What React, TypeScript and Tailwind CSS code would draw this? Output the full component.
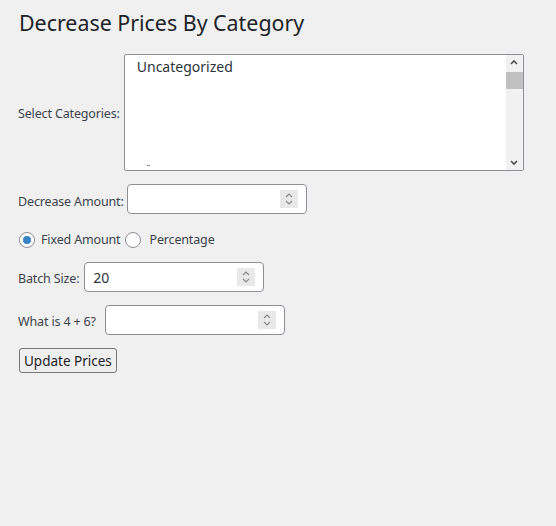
const Spinner = () => (
  <span className="flex h-[18px] w-[18px] flex-col items-center justify-center bg-[#e9e9ea]">
    <svg width="10" height="14" viewBox="0 0 10 14" fill="none" stroke="#8a8a8a" strokeWidth="1.2">
      <path d="M2 5 L5 2 L8 5" />
      <path d="M2 9 L5 12 L8 9" />
    </svg>
  </span>
);

const NumberInput = ({ value = "" }: { value?: string }) => (
  <div className="flex h-[30px] w-[180px] items-center justify-between rounded-[4px] border border-[#8c8f94] bg-white pl-[8px] pr-[8px]">
    <span className="text-[14px] text-[#2c3338]">{value}</span>
    <Spinner />
  </div>
);

const Radio = ({ checked }: { checked?: boolean }) => (
  <span className="flex h-[16px] w-[16px] shrink-0 items-center justify-center rounded-full border border-[#8c8f94] bg-white">
    {checked && <span className="h-[8px] w-[8px] rounded-full bg-[#3582c4]" />}
  </span>
);

export default function App() {
  return (
    <main
      className="min-h-[526px] w-[556px] bg-[#f0f0f1] pl-[18px] pt-[8px] text-[12.5px] tracking-[-0.15px] text-[#3c434a]"
      style={{ fontFamily: '"Noto Sans", "Open Sans", sans-serif' }}
    >
      <h1 className="pl-[1px] text-[21.4px] leading-[30px] font-normal tracking-normal text-[#1d2327]">
        Decrease Prices By Category
      </h1>

      <div className="mt-[16px] flex items-center gap-[4px]">
        <span className="pt-[4px]">Select Categories:</span>
        <div className="relative flex h-[117px] w-[400px] overflow-hidden rounded-[2px] border border-[#8c8f94] bg-white">
          <div className="relative flex-1 pl-[12px] pt-[1px] text-[14px] tracking-normal text-[#2c3338]">
            Uncategorized
            <span className="absolute bottom-[4px] left-[22px] h-[1px] w-[3px] bg-[#8c8f94]" />
          </div>
          <div className="flex w-[17px] flex-col items-center justify-between bg-[#f1f1f1]">
            <svg width="10" height="16" viewBox="0 0 10 16" fill="none" stroke="#505050" strokeWidth="1.6">
              <path d="M2 9 L5 6 L8 9" />
            </svg>
            <div className="absolute top-[17px] right-0 h-[17px] w-[17px] bg-[#c1c1c1]" />
            <svg width="10" height="16" viewBox="0 0 10 16" fill="none" stroke="#505050" strokeWidth="1.6">
              <path d="M2 7 L5 10 L8 7" />
            </svg>
          </div>
        </div>
      </div>

      <div className="mt-[13px] flex items-center gap-[3px]">
        <span className="pt-[6px]">Decrease Amount:</span>
        <NumberInput />
      </div>

      <div className="mt-[18px] flex h-[16px] items-center pl-[1px] leading-[16px]">
        <Radio checked />
        <span className="ml-[6px] mr-[5px]">Fixed Amount</span>
        <Radio />
        <span className="ml-[8px]">Percentage</span>
      </div>

      <div className="mt-[14px] flex items-center gap-[5px]">
        <span className="pt-[4px]">Batch Size:</span>
        <NumberInput value="20" />
      </div>

      <div className="mt-[13px] flex items-center gap-[9px]">
        <span className="pt-[4px]">What is 4 + 6?</span>
        <NumberInput />
      </div>

      <button className="mt-[13px] ml-[1px] h-[25px] rounded-[3px] border border-[#767676] bg-[#efefef] px-[4px] text-[13.5px] leading-[20px] tracking-normal text-[#1d2327]">
        Update Prices
      </button>
    </main>
  );
}
